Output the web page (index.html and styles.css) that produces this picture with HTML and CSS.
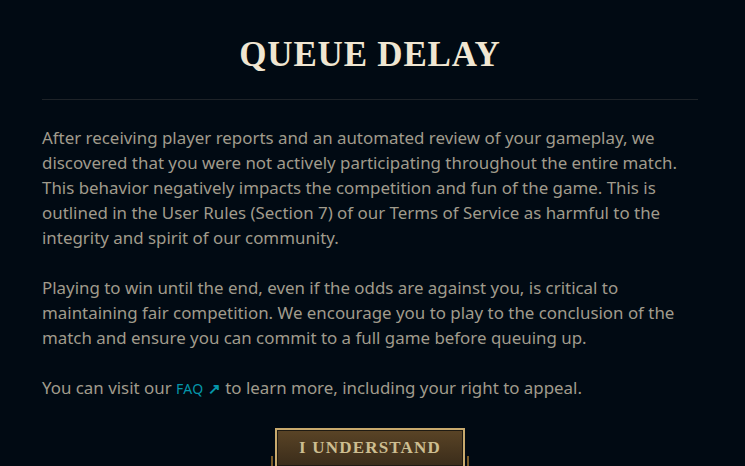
FILE: index.html
```html
<!DOCTYPE html>
<html lang="en">
<head>
    <meta charset="UTF-8">
    <meta name="viewport" content="width=device-width, initial-scale=1.0">
    <title>Queue Delay</title>
    <link rel="stylesheet" href="styles.css">
</head>
<body>
    <div class="modal">
        <h1 class="modal-title">Queue Delay</h1>
        <div class="modal-divider"></div>

        <div class="modal-body">
            <p>After receiving player reports and an automated review of your gameplay, we discovered that you were not actively participating throughout the entire match. This behavior negatively impacts the competition and fun of the game. This is outlined in the User Rules (Section 7) of our Terms of Service as harmful to the integrity and spirit of our community.</p>
            <p>Playing to win until the end, even if the odds are against you, is critical to maintaining fair competition. We encourage you to play to the conclusion of the match and ensure you can commit to a full game before queuing up.</p>
            <p>You can visit our <a href="#" class="faq-link">FAQ <span class="arrow">&#8599;</span></a> to learn more, including your right to appeal.</p>
        </div>

        <div class="modal-footer">
            <div class="button-frame">
                <button class="understand-button">I Understand</button>
            </div>
        </div>
    </div>
</body>
</html>
```

FILE: styles.css
```css
:root {
    --background: #010a13;
    --text: #a09b8c;
    --title: #f0e6d2;
    --divider: #1e2328;
    --gold: #c8aa6e;
    --gold-dark: #785a28;
    --link: #0596aa;
}

body {
    margin: 0;
    padding: 0;
    background-color: var(--background);
    color: var(--text);
    font-family: 'Noto Sans', 'Open Sans', sans-serif;
    height: 100vh;
    overflow: hidden;
}

.modal {
    padding: 33px 47px 0 42px;
    display: flex;
    flex-direction: column;
}

.modal-title {
    margin: 0;
    text-align: center;
    color: var(--title);
    font-family: 'Liberation Serif', 'DejaVu Serif', serif;
    font-weight: 700;
    font-size: 35px;
    letter-spacing: 0.8px;
    line-height: 44px;
    text-transform: uppercase;
}

.modal-divider {
    height: 1px;
    background-color: var(--divider);
    margin-top: 22px;
}

/* Body copy */
.modal-body {
    padding-top: 25px;
}

.modal-body p {
    margin: 0 0 25px;
    font-size: 16.9px;
    line-height: 25px;
}

.faq-link {
    color: var(--link);
    text-decoration: none;
    font-size: 14px;
    text-transform: uppercase;
    letter-spacing: 0.3px;
}

.faq-link .arrow {
    font-size: 15px;
    font-weight: 700;
}

/* Footer button */
.modal-footer {
    display: flex;
    justify-content: center;
    padding-top: 2px;
}

.button-frame {
    position: relative;
    padding: 0 4px 2px;
}

.button-frame::before,
.button-frame::after {
    content: "";
    position: absolute;
    bottom: 0;
    width: 2px;
    height: 14px;
    background-color: var(--gold-dark);
}

.button-frame::before {
    left: 0;
}

.button-frame::after {
    right: 0;
}

.understand-button {
    display: block;
    width: 190px;
    height: 40px;
    border: 2px solid var(--gold);
    box-shadow: inset 0 0 0 1px #1e1a12;
    background: linear-gradient(to bottom, #5a4426, #3a2c1a);
    color: #cdbe91;
    font-family: 'Liberation Serif', 'DejaVu Serif', serif;
    font-weight: 700;
    font-size: 17px;
    letter-spacing: 1.2px;
    text-transform: uppercase;
    padding: 0;
    cursor: pointer;
}
```
